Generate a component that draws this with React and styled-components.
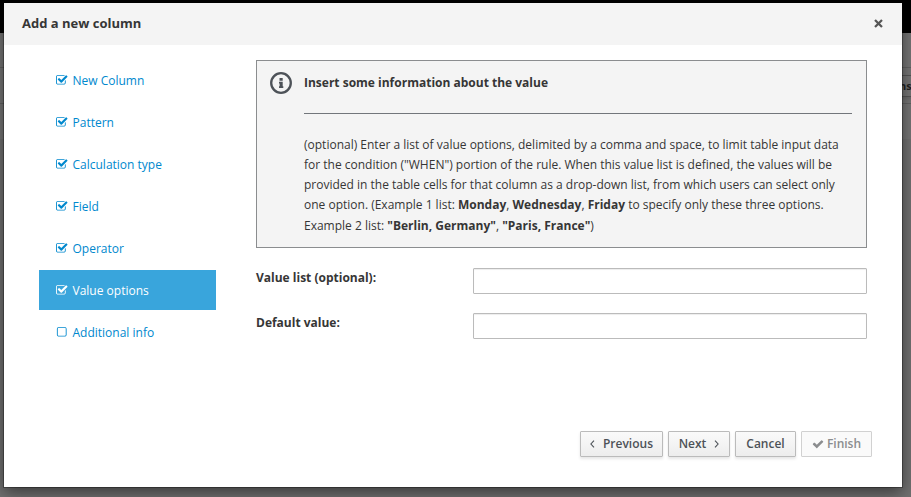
import React from "react";
import styled, { createGlobalStyle, css } from "styled-components";

const GlobalStyle = createGlobalStyle`
  *, *::before, *::after { box-sizing: border-box; }
  html, body, #root { margin: 0; height: 100%; }
  body {
    overflow: hidden;
    font-family: "Open Sans", Arial, sans-serif;
    font-size: 12px;
    line-height: 20px;
    color: #363636;
  }
`;

const Screen = styled.div`
  position: relative;
  height: 497px;
  overflow: hidden;
  background: #757575;
`;

const Masthead = styled.div`
  height: 33px;
  background: #000;
`;

const PageBar = styled.div`
  display: flex;
  justify-content: flex-end;
  align-items: center;
  height: ${({ $height }) => $height}px;
  border-bottom: 1px solid #626262;
`;

const PageButton = styled.div`
  height: 22px;
  width: 30px;
  padding-left: 14px;
  border: 1px solid #555;
  border-right: 0;
  font-size: 11px;
  font-weight: 700;
  line-height: 20px;
  color: #222;
  margin-right: -3px;
  box-shadow: 0 2px 3px rgba(3, 3, 3, 0.1);
`;

const PageSection = styled.div`
  height: 35px;
  background: #757575;
`;

const PageContent = styled.div`
  height: 359px;
  background: #707070;
`;

const Dialog = styled.div`
  position: absolute;
  top: 3px;
  left: 4px;
  width: 898px;
  height: 484px;
  display: flex;
  flex-direction: column;
  background: #fff;
  box-shadow: 0 0 0 1px rgba(0, 0, 0, 0.3), 0 5px 15px rgba(0, 0, 0, 0.5);
`;

const Header = styled.header`
  display: flex;
  align-items: center;
  justify-content: space-between;
  flex: none;
  height: 42px;
  padding: 0 18px;
  background: #f4f4f4;
`;

const Title = styled.h4`
  margin: 0 0 2px;
  font-size: 13px;
  font-weight: 700;
  line-height: 20px;
`;

const CloseButton = styled.button`
  display: flex;
  padding: 1px;
  margin-bottom: 1px;
  border: 0;
  background: none;
  color: #555;
`;

const Body = styled.div`
  display: flex;
  flex: 1;
`;

const Steps = styled.nav`
  display: flex;
  flex-direction: column;
  gap: 2px;
  width: 177px;
  margin: 15px 40px 0 35px;
`;

const Step = styled.a`
  display: flex;
  align-items: center;
  gap: 5px;
  height: 40px;
  padding: 2px 0 0 17px;
  color: ${({ $active }) => ($active ? "#fff" : "#0088ce")};
  background: ${({ $active }) => ($active ? "#39a5dc" : "transparent")};
`;

const Main = styled.main`
  display: flex;
  flex-direction: column;
  width: 611px;
  padding-top: 15px;
`;

const Info = styled.section`
  display: flex;
  height: 188px;
  padding: 11px 14px 0 13px;
  border: 1px solid #8b8d8f;
  background: #f4f4f4;
`;

const InfoText = styled.div`
  flex: 1;
  margin-left: 12px;
`;

const InfoTitle = styled.div`
  height: 42px;
  padding-top: 1px;
  border-bottom: 1px solid #72767b;
  font-weight: 700;
`;

const InfoCopy = styled.p`
  margin: 20.8px 0 0;
  line-height: 20.2px;
  white-space: nowrap;
`;

const Field = styled.label`
  display: flex;
  height: 26px;
  margin-top: ${({ $gap }) => $gap}px;
  font-weight: 700;
`;

const FieldName = styled.span`
  width: 217px;
`;

const TextInput = styled.input`
  flex: 1;
  min-width: 0;
  height: 26px;
  padding: 2px 6px;
  border: 1px solid #bbb;
  border-radius: 1px;
  background: #fff;
  box-shadow: inset 0 1px 1px rgba(3, 3, 3, 0.075);
  font: inherit;
`;

const Actions = styled.footer`
  display: flex;
  gap: 5px;
  margin: 92px -5px 0 0;
  justify-content: flex-end;
`;

const Button = styled.button`
  display: flex;
  align-items: center;
  justify-content: center;
  gap: ${({ $gap = 0 }) => $gap}px;
  width: ${({ $width }) => $width}px;
  height: 26px;
  padding: 0 0 1px;
  border: 1px solid #bbb;
  border-radius: 1px;
  background: linear-gradient(to bottom, #fafafa 0%, #ededed 100%);
  box-shadow: 0 2px 3px rgba(3, 3, 3, 0.1);
  font: 600 12px/20px "Open Sans", Arial, sans-serif;
  color: #4d5258;
  ${({ disabled }) =>
    disabled &&
    css`
      border-color: #d1d1d1;
      background: #fafafa;
      box-shadow: none;
      color: #8b8d8f;
    `}
`;

const Icon = styled.svg`
  display: block;
  flex: none;
  fill: currentColor;
`;

const StepIcon = styled(Icon)`
  margin-bottom: 1px;
`;

const CheckSquare = () => (
  <StepIcon width="11.5" height="12.4" viewBox="0 0 1664 1792">
    <path d="M1408 930v318q0 119-84.5 203.5t-203.5 84.5h-832q-119 0-203.5-84.5t-84.5-203.5v-832q0-119 84.5-203.5t203.5-84.5h832q63 0 117 25 15 7 18 23 3 17-9 29l-49 49q-10 10-23 10-3 0-9-2-23-6-45-6h-832q-66 0-113 47t-47 113v832q0 66 47 113t113 47h832q66 0 113-47t47-113v-254q0-13 9-22l64-64q10-10 23-10 6 0 12 3 20 8 20 29zm231-489l-814 814q-24 24-57 24t-57-24l-430-430q-24-24-24-57t24-57l110-110q24-24 57-24t57 24l263 263 647-647q24-24 57-24t57 24l110 110q24 24 24 57t-24 57z" />
  </StepIcon>
);

const EmptySquare = () => (
  <StepIcon width="11.5" height="12.4" viewBox="0 0 1664 1792">
    <path d="M1248 256h-832q-66 0-113 47t-47 113v832q0 66 47 113t113 47h832q66 0 113-47t47-113v-832q0-66-47-113t-113-47zm288 160v832q0 119-84.5 203.5t-203.5 84.5h-832q-119 0-203.5-84.5t-84.5-203.5v-832q0-119 84.5-203.5t203.5-84.5h832q119 0 203.5 84.5t84.5 203.5z" />
  </StepIcon>
);

const Check = () => (
  <Icon width="12" height="12" viewBox="0 0 1792 1792">
    <path d="M1671 566q0 40-28 68l-724 724-136 136q-28 28-68 28t-68-28l-136-136-362-362q-28-28-28-68t28-68l136-136q28-28 68-28t68 28l294 295 656-657q28-28 68-28t68 28l136 136q28 28 28 68z" />
  </Icon>
);

const Stroke = styled(Icon)`
  fill: none;
  stroke: currentColor;
  stroke-width: ${({ $weight }) => $weight};
`;

const Chevron = ({ points }) => (
  <Stroke width="5" height="8" viewBox="0 0 5 8" $weight={1.1}>
    <polyline points={points} />
  </Stroke>
);

const InfoIcon = () => (
  <Icon width="22" height="22" viewBox="0 0 22 22" color="#4d5258">
    <circle cx="11" cy="11" r="9.8" fill="none" stroke="currentColor" strokeWidth="2.3" />
    <path d="M9.5 6h3.2v2.7H9.5zM9 9.8h3.7v4.4h.6V16H9v-1.8h.6v-2.6H9z" />
  </Icon>
);

const steps = [
  "New Column",
  "Pattern",
  "Calculation type",
  "Field",
  "Operator",
  "Value options",
  "Additional info",
];

export default function App() {
  return (
    <Screen>
      <GlobalStyle />
      <Masthead />
      <PageBar $height={35} />
      <PageBar $height={36}>
        <PageButton>ns</PageButton>
      </PageBar>
      <PageSection />
      <PageContent />
      <Dialog role="dialog">
        <Header>
          <Title>Add a new column</Title>
          <CloseButton aria-label="Close">
            <Stroke width="9" height="9" viewBox="0 0 8 8" $weight={2}>
              <path d="M.9.9l6.2 6.2M7.1.9L.9 7.1" />
            </Stroke>
          </CloseButton>
        </Header>
        <Body>
          <Steps>
            {steps.map((name) => (
              <Step key={name} $active={name === "Value options"}>
                {name === "Additional info" ? <EmptySquare /> : <CheckSquare />}
                {name}
              </Step>
            ))}
          </Steps>
          <Main>
            <Info>
              <InfoIcon />
              <InfoText>
                <InfoTitle>Insert some information about the value</InfoTitle>
                <InfoCopy>
                  (optional) Enter a list of value options, delimited by a comma and space, to limit table input data
                  <br />
                  for the condition ("WHEN") portion of the rule. When this value list is defined, the values will be
                  <br />
                  provided in the table cells for that column as a drop-down list, from which users can select only
                  <br />
                  one option. (Example 1 list: <b>Monday</b>, <b>Wednesday</b>, <b>Friday</b> to specify only these
                  three options.
                  <br />
                  Example 2 list: <b>"Berlin, Germany"</b>, <b>"Paris, France"</b>)
                </InfoCopy>
              </InfoText>
            </Info>
            <Field $gap={20}>
              <FieldName>Value list (optional):</FieldName>
              <TextInput />
            </Field>
            <Field $gap={19}>
              <FieldName>Default value:</FieldName>
              <TextInput />
            </Field>
            <Actions>
              <Button $width={83} $gap={8}>
                <Chevron points="4,.6 .9,4 4,7.4" />
                Previous
              </Button>
              <Button $width={62} $gap={8}>
                Next
                <Chevron points="1,.6 4.1,4 1,7.4" />
              </Button>
              <Button $width={61}>Cancel</Button>
              <Button $width={71} $gap={3} disabled>
                <Check />
                Finish
              </Button>
            </Actions>
          </Main>
        </Body>
      </Dialog>
    </Screen>
  );
}
